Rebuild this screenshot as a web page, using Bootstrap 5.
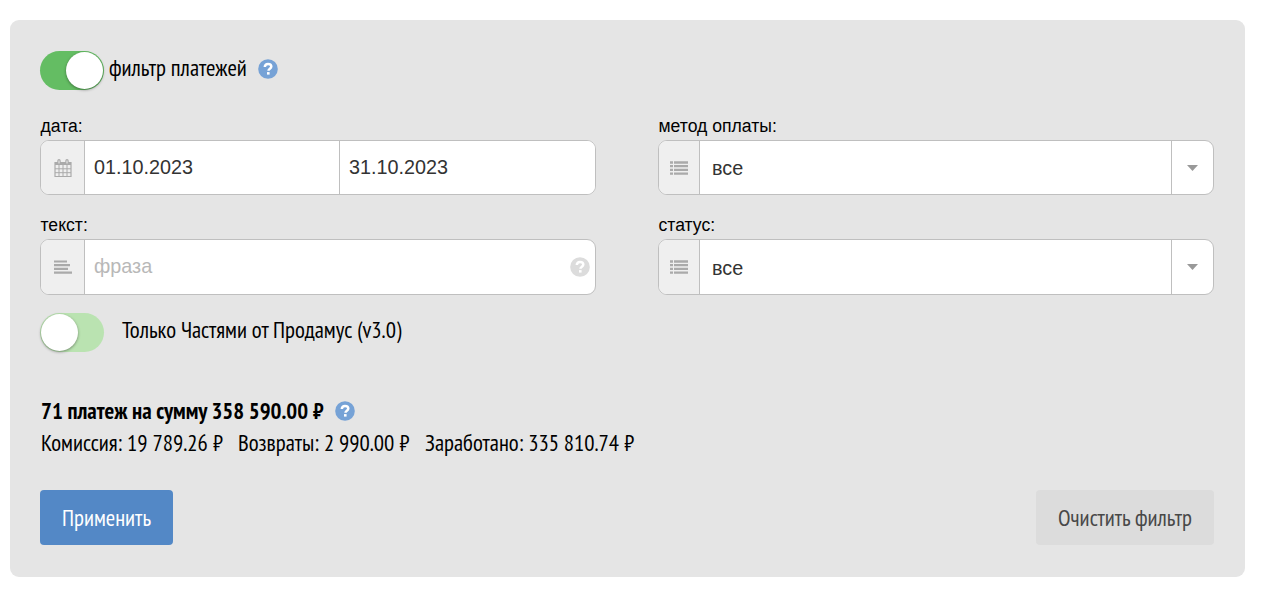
<!DOCTYPE html>
<html lang="ru">
<head>
  <meta charset="UTF-8" />
  <meta name="viewport" content="width=device-width, initial-scale=1.0" />
  <title>Фильтр платежей</title>
  <link href="https://cdn.jsdelivr.net/npm/bootstrap@5.3.0/dist/css/bootstrap.min.css" rel="stylesheet" />
  <style>
    body {
      background: #fff;
      color: #000;
      font-family: "Liberation Sans", Arial, sans-serif;
    }
    .filter-panel {
      width: 1235px;
      height: 557px;
      margin: 20px 0 0 10px;
      padding: 31px 31px 32px 30px;
      background: #e5e5e5;
      border-radius: 9px;
    }
    .cond {
      white-space: nowrap;
      font-family: "PT Sans Narrow", "Open Sans", sans-serif;
      font-size: 22.8px;
      line-height: 32px;
    }
    .w-filter {
      width: 149px;
      margin: -6px 0 0 5px;
    }
    .w-only { margin: -5px 0 0 18px; }
    .w-total { width: 294px; }
    .w-fee { width: 197px; }
    .w-refund { width: 187px; }
    .help-icon {
      color: #76a2d6;
      --q: #fff;
    }
    .help-icon.muted {
      color: #dcdcdc;
    }
    .toggle {
      width: 64px;
      height: 39px;
      border-radius: 20px;
      background: #bae3b1;
      display: flex;
      padding: 1px;
      flex: none;
    }
    .toggle::before {
      content: "";
      width: 37px;
      height: 37px;
      border-radius: 50%;
      background: #fff;
      box-shadow: 0 1px 3px rgba(0,0,0,.4);
    }
    .toggle.on {
      background: #64bd63;
      justify-content: flex-end;
    }
    .fields {
      display: grid;
      grid-template-columns: 556px 556px;
      column-gap: 62px;
      row-gap: 19px;
      margin-top: 25px;
    }
    .fields label {
      display: block;
      font-size: 17.6px;
      line-height: 20px;
      height: 25px;
      padding: 1px 0 0 .5px;
    }
    .field {
      height: 55px;
      border: 1px solid #bfbfbf;
      border-radius: 9px;
      background: #fff;
      overflow: hidden;
    }
    .field.tall { height: 56px; }
    .field > * + * { border-left: 1px solid #bfbfbf !important; }
    .addon {
      width: 43px;
      background: #efefef;
      flex: none;
    }
    .addon.list-icon { width: 40px; }
    .arrow-box { width: 42px; flex: none; }
    .field input, .picked {
      min-width: 0;
      border: 0;
      outline: 0;
      padding: 0 9px;
      font-size: 19.8px;
      color: #333;
    }
    .field .date-from {
      width: 255px;
      flex: none;
    }
    .picked { padding: 2px 0 0 12px; }
    .tall .picked { padding-top: 3px; }
    .field input::placeholder { color: #b8b8b8; opacity: 1; }
    .hint { border-left: 0 !important; padding-right: 5px; }
    .only-row { margin-top: 18px; }
    .totals {
      margin-top: 43px;
      padding-left: 1px;
    }
    .action {
      height: 55px;
      border: 0;
      border-radius: 4px;
      padding: 0;
    }
    .apply { width: 133px; background: #5388c6; color: #fff; }
    .clear { width: 178px; background: #dcdcdc; color: #484848; }
  </style>
</head>
<body>
  <svg class="d-none">
    <symbol id="help" viewBox="0 0 20 20">
      <circle cx="10" cy="10" r="9.8" fill="currentColor"/>
      <path d="M6.8 8.1C6.8 5.7 8.2 4.9 10 4.9s3.3 1 3.3 2.7c0 2.2-2.8 2.1-2.8 4.1" fill="none" stroke="var(--q)" stroke-width="2.5"/>
      <rect x="9" y="13.1" width="2.6" height="2.5" fill="var(--q)"/>
    </symbol>
    <symbol id="rows" viewBox="0 0 18 14">
      <path d="M0 1.5h3M0 5.2h3M0 8.9h3M0 12.6h3M4 1.5h14M4 5.2h14M4 8.9h14M4 12.6h14" stroke="#aaa" stroke-width="2.3"/>
    </symbol>
  </svg>

  <form class="filter-panel d-flex flex-column">
    <div class="d-flex align-items-center">
      <div class="toggle on"></div>
      <div class="cond w-filter">фильтр платежей</div>
      <svg class="help-icon mb-1" width="20" height="20"><use href="#help"/></svg>
    </div>

    <div class="fields">
      <div>
        <label>дата:</label>
        <div class="field d-flex">
          <div class="addon d-flex align-items-center justify-content-center">
            <svg width="18" height="18" viewBox="0 0 18 18" fill="none" stroke="#aaa">
              <path d="M1 3.5h16v14H1z" stroke-width="1.2"/>
              <path d="M1 4.5h16" stroke-width="3"/>
              <path d="M5 6v11M9 6v11M13 6v11M1 9.8h16M1 13.7h16"/>
              <path d="M5 1.8v2.5M13 1.8v2.5" stroke-width="3.4" stroke-linecap="round"/>
              <path d="M5 1.5v3M13 1.5v3" stroke="#efefef"/>
            </svg>
          </div>
          <input type="text" value="01.10.2023" class="date-from" />
          <input type="text" value="31.10.2023" class="flex-fill" />
        </div>
      </div>
      <div>
        <label>метод оплаты:</label>
        <div class="field d-flex">
          <div class="addon list-icon d-flex align-items-center justify-content-center">
            <svg width="18" height="14"><use href="#rows"/></svg>
          </div>
          <div class="picked flex-fill d-flex align-items-center">все</div>
          <div class="arrow-box d-flex align-items-center justify-content-center">
            <svg width="11" height="6"><path d="M0 0h11l-5.5 6z" fill="#999"/></svg>
          </div>
        </div>
      </div>
      <div>
        <label>текст:</label>
        <div class="field tall d-flex">
          <div class="addon d-flex align-items-center justify-content-center">
            <svg width="18" height="14" viewBox="0 0 18 14">
              <path d="M0 1.5h13M0 5.2h16M0 8.9h14M0 12.6h18" stroke="#aaa" stroke-width="2.2"/>
            </svg>
          </div>
          <input type="text" placeholder="фраза" class="flex-fill" />
          <div class="hint d-flex align-items-center">
            <svg class="help-icon muted" width="20" height="20"><use href="#help"/></svg>
          </div>
        </div>
      </div>
      <div>
        <label>статус:</label>
        <div class="field tall d-flex">
          <div class="addon list-icon d-flex align-items-center justify-content-center">
            <svg width="18" height="14"><use href="#rows"/></svg>
          </div>
          <div class="picked flex-fill d-flex align-items-center">все</div>
          <div class="arrow-box d-flex align-items-center justify-content-center">
            <svg width="11" height="6"><path d="M0 0h11l-5.5 6z" fill="#999"/></svg>
          </div>
        </div>
      </div>
    </div>

    <div class="only-row d-flex align-items-center">
      <div class="toggle"></div>
      <div class="cond w-only">Только Частями от Продамус (v3.0)</div>
    </div>

    <div class="totals">
      <div class="d-flex align-items-center">
        <div class="cond w-total fw-bold">71 платеж на сумму 358 590.00 ₽</div>
        <svg class="help-icon" width="20" height="20"><use href="#help"/></svg>
      </div>
      <div class="d-flex">
        <div class="cond w-fee">Комиссия: 19 789.26 ₽</div>
        <div class="cond w-refund">Возвраты: 2 990.00 ₽</div>
        <div class="cond">Заработано: 335 810.74 ₽</div>
      </div>
    </div>

    <div class="d-flex justify-content-between mt-auto">
      <button type="button" class="action apply cond">Применить</button>
      <button type="button" class="action clear cond">Очистить фильтр</button>
    </div>
  </form>

  <script src="https://cdn.jsdelivr.net/npm/bootstrap@5.3.0/dist/js/bootstrap.bundle.min.js"></script>
</body>
</html>
